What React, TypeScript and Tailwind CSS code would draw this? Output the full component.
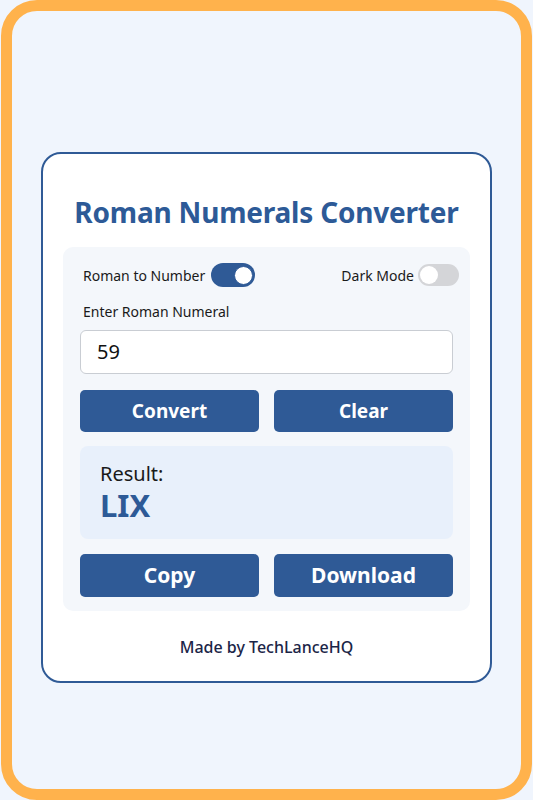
import React from "react";

export default function App() {
  const font = { fontFamily: '"Noto Sans", "Open Sans", sans-serif' };
  return (
    <div className="w-[533px] h-[800px] bg-[#f0f5fd]" style={font}>
      <div className="ml-[1px] w-[531px] h-[800px] border-[11px] border-[#ffb24c] rounded-[36px] bg-[#f0f5fd] pt-[141px]">
        <div className="mx-auto w-[451px] h-[531px] border-2 border-[#2f5a96] rounded-[20px] bg-white px-[20px] flex flex-col">
          <h1 className="text-[28px] leading-[34px] font-bold text-[#2d5a97] text-center mt-[41px] tracking-[-0.2px]">
            Roman Numerals Converter
          </h1>
          <div className="mt-[18px] bg-[#f4f7fb] rounded-[10px] px-[17px] pt-[16px] pb-[14px]">
            <div className="flex items-center justify-between pl-[3px] mr-[-6px]">
              <div className="flex items-center gap-[6px]">
                <span className="text-[14px] text-[#1a1a1a]">Roman to Number</span>
                <div className="w-[44px] h-[24px] rounded-full bg-[#2f5a96] flex items-center justify-end pr-[2px]">
                  <div className="w-[19px] h-[19px] rounded-full bg-white border-[1.5px] border-[#2f5a96]" />
                </div>
              </div>
              <div className="flex items-center gap-[4px]">
                <span className="text-[14px] text-[#1a1a1a]">Dark Mode</span>
                <div className="w-[41px] h-[22px] rounded-full bg-[#d4d5d8] flex items-center pl-[2px]">
                  <div className="w-[18px] h-[18px] rounded-full bg-white" />
                </div>
              </div>
            </div>
            <div className="mt-[15px] pl-[3px] text-[14px] text-[#1a1a1a] leading-[20px]">
              Enter Roman Numeral
            </div>
            <div className="mt-[8px] h-[44px] rounded-[6px] border border-[#c9cdd3] bg-white flex items-center px-[16px] text-[20px] text-[#111]">
              59
            </div>
            <div className="mt-[16px] grid grid-cols-2 gap-[15px]">
              <button className="h-[42px] rounded-[5px] bg-[#2f5a96] text-white text-[19px] font-bold">Convert</button>
              <button className="h-[42px] rounded-[5px] bg-[#2f5a96] text-white text-[19px] font-bold">Clear</button>
            </div>
            <div className="mt-[14px] h-[93px] rounded-[8px] bg-[#e8f0fb] px-[20px] pt-[15px]">
              <div className="text-[20px] leading-[26px] text-[#1a1a1a]">Result:</div>
              <div className="text-[31px] leading-[36px] font-bold text-[#2d5a97]">LIX</div>
            </div>
            <div className="mt-[15px] grid grid-cols-2 gap-[15px]">
              <button className="h-[43px] rounded-[5px] bg-[#2f5a96] text-white text-[21px] font-bold">Copy</button>
              <button className="h-[43px] rounded-[5px] bg-[#2f5a96] text-white text-[21px] font-bold">Download</button>
            </div>
          </div>
          <div className="mt-[24px] text-center text-[16px] font-medium text-[#1b2547]">Made by TechLanceHQ</div>
        </div>
      </div>
    </div>
  );
}
